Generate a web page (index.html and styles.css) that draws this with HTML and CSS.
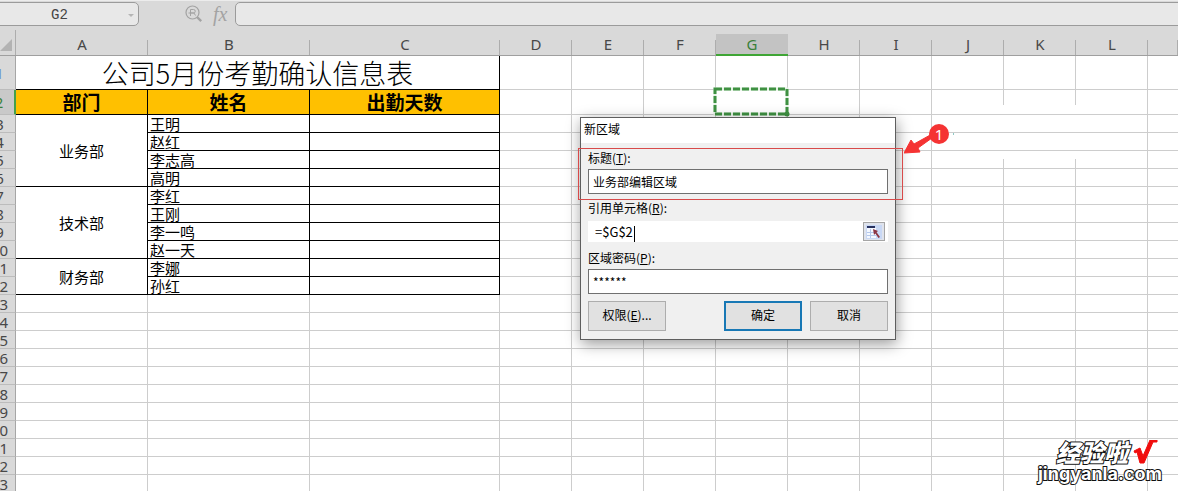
FILE: index.html
```html
<!DOCTYPE html>
<html lang="zh-CN">
<head>
<meta charset="utf-8">
<meta name="viewport" content="width=device-width, initial-scale=1">
<title>公司5月份考勤确认信息表</title>
<link rel="stylesheet" href="styles.css">
</head>
<body>
<main class="app">
  <div class="formula-bar">
    <button class="name-box" type="button" aria-label="名称框"><span>G2</span><i class="caret"></i></button>
    <div class="tools">
      <svg width="18" height="18" viewBox="0 0 18 18" fill="none" stroke="#a3a3a3" aria-hidden="true">
        <circle cx="7.5" cy="7.5" r="6.5" stroke-width="1.2"/>
        <path d="M5.500 11V4.500h3a1.700 1.700 0 0 1 0 3.500h-3M3.500 8H9l1.500 2.500" stroke-width="1"/>
        <path d="M12 12l4.200 4.200" stroke-width="2.4"/>
      </svg>
      <span class="fx">fx</span>
    </div>
    <input class="formula" type="text" aria-label="编辑栏">
  </div>

  <table class="sheet">
    <colgroup><col class="c-num"><col class="c-a"><col class="c-b"><col class="c-c"><col class="c-std" span="9"><col></colgroup>
    <thead>
      <tr><th class="corner"><svg width="12" height="12" viewBox="0 0 12 12" aria-hidden="true"><path d="M12 0v12H0z" fill="#b3b3b3"/></svg></th><th>A</th><th>B</th><th>C</th><th>D</th><th>E</th><th>F</th><th class="current">G</th><th>H</th><th>I</th><th>J</th><th>K</th><th>L</th><th></th></tr>
    </thead>
    <tbody>
      <tr class="r-title"><th class="blue">1</th><td class="ink title" colspan="3">公司5月份考勤确认信息表</td><td><td><td><td><td><td><td><td><td><td></tr>
      <tr class="r-head"><th class="current">2</th><td class="ink head">部门</td><td class="ink head">姓名</td><td class="ink head">出勤天数</td><td><td><td><td class="selected"><svg class="marquee" aria-hidden="true"><rect class="base" width="100%" height="100%"/><rect class="dash" width="100%" height="100%"/><circle class="handle" cx="100%" cy="100%" r="2.5"/></svg></td><td><td><td class="line-top"><td class="line-top"><td><td></tr>
      <tr><th>3</th><td class="ink dept" rowspan="4">业务部</td><td class="ink name">王明</td><td class="ink"></td><td><td><td><td><td><td><td class="no-line"><td class="no-line"><td><td></tr>
      <tr><th>4</th><td class="ink name">赵红</td><td class="ink"></td><td><td><td><td><td><td><td class="no-line"><td class="no-line"><td><td></tr>
      <tr><th>5</th><td class="ink name">李志高</td><td class="ink"></td><td><td><td><td><td><td><td class="line-bottom"><td class="line-bottom"><td><td></tr>
      <tr><th>6</th><td class="ink name">高明</td><td class="ink"></td><td><td><td><td><td><td><td><td><td><td></tr>
      <tr><th>7</th><td class="ink dept" rowspan="4">技术部</td><td class="ink name">李红</td><td class="ink"></td><td><td><td><td><td><td><td><td><td><td></tr>
      <tr><th>8</th><td class="ink name">王刚</td><td class="ink"></td><td><td><td><td><td><td><td><td><td><td></tr>
      <tr><th>9</th><td class="ink name">李一鸣</td><td class="ink"></td><td><td><td><td><td><td><td><td><td><td></tr>
      <tr><th>10</th><td class="ink name">赵一天</td><td class="ink"></td><td><td><td><td><td><td><td><td><td><td></tr>
      <tr><th>11</th><td class="ink dept" rowspan="2">财务部</td><td class="ink name">李娜</td><td class="ink"></td><td><td><td><td><td><td><td><td><td><td></tr>
      <tr><th>12</th><td class="ink name">孙红</td><td class="ink"></td><td><td><td><td><td><td><td><td><td><td></tr>
      <tr><th>13</th><td><td><td><td><td><td><td><td><td><td><td><td><td></tr>
      <tr><th>14</th><td><td><td><td><td><td><td><td><td><td><td><td><td></tr>
      <tr><th>15</th><td><td><td><td><td><td><td><td><td><td><td><td><td></tr>
      <tr><th>16</th><td><td><td><td><td><td><td><td><td><td><td><td><td></tr>
      <tr><th>17</th><td><td><td><td><td><td><td><td><td><td><td><td><td></tr>
      <tr><th>18</th><td><td><td><td><td><td><td><td><td><td><td><td><td></tr>
      <tr><th>19</th><td><td><td><td><td><td><td><td><td><td><td><td><td></tr>
      <tr><th>20</th><td><td><td><td><td><td><td><td><td><td><td><td><td></tr>
      <tr><th>21</th><td><td><td><td><td><td><td><td><td><td><td><td><td></tr>
      <tr><th>22</th><td><td><td><td><td><td><td><td><td><td><td><td><td></tr>
      <tr><th>23</th><td><td><td><td><td><td><td><td><td><td><td><td><td></tr>
    </tbody>
  </table>

  <form class="dialog" role="dialog" aria-labelledby="dialog-title">
    <h1 class="dialog-title" id="dialog-title">新区域</h1>
    <div class="dialog-body">
      <label for="area-title">标题(<u>T</u>):</label>
      <input class="field" id="area-title" type="text" value="业务部编辑区域">
      <label for="area-ref">引用单元格(<u>R</u>):</label>
      <div class="ref">
        <div class="ref-value"><input id="area-ref" type="text" value="=$G$2"><i class="text-caret"></i></div>
        <button class="picker" type="button" aria-label="选择单元格">
          <svg width="16" height="14" viewBox="0 0 16 14" aria-hidden="true">
            <rect width="16" height="14" fill="#c9d8f5"/>
            <rect x="1" y="3" width="9" height="10" fill="#f4f8ff"/>
            <path d="M4.500 4v9M1 7.500h9M1 10.500h9" stroke="#b5c8ea" fill="none"/>
            <rect x="1" y="1" width="8" height="2" fill="#26305e"/>
            <path d="M7 4l5 2-1.400 1.200L14 12l-1.500 1-3.200-4.500L8 10z" fill="#8b3543"/>
          </svg>
        </button>
      </div>
      <label for="area-pass">区域密码(<u>P</u>):</label>
      <input class="field" id="area-pass" type="text" value="******">
      <div class="actions">
        <button type="button">权限(<u>E</u>)...</button>
        <button class="primary" type="button">确定</button>
        <button type="button">取消</button>
      </div>
    </div>
  </form>

  <div class="callout"></div>
  <svg class="arrow" width="52" height="34" viewBox="0 0 52 34" aria-hidden="true">
    <path d="M0 31L7 18l3 4L28 12v4L14 26l2 4z" fill="#f53333" stroke="#f53333"/>
    <path d="M49.500 11v2" stroke="#8fc9c4"/>
  </svg>
  <span class="badge">1</span>

  <div class="watermark">
    <div class="mark-top"><span>经验啦</span>
      <svg width="25" height="24" viewBox="0 0 25 24" aria-hidden="true"><path d="M1 11l6-3 3 8L17 0h7v2h-4L11 23H7L4 12l-2 1z" fill="#f00d0d" stroke="#f00d0d" stroke-width="1"/></svg>
    </div>
    <div class="mark-site">jingyanla.com</div>
  </div>
</main>
</body>
</html>
```
FILE: styles.css
```css
* {
  box-sizing: border-box;
}

body {
  margin: 0;
  background: #fff;
  font-family: "Noto Sans", "Noto Sans CJK SC", sans-serif;
}

.app {
  position: relative;
  height: 100vh;
  overflow: hidden;
}

button,
input {
  font: inherit;
  color: inherit;
}

/* Formula bar */
.formula-bar {
  display: flex;
  align-items: flex-start;
  height: 30px;
  padding-top: 1px;
  background: #d9d9d9;
  border-top: 1px solid #ececec;
}

.name-box {
  display: flex;
  align-items: center;
  width: 149px;
  height: 24px;
  margin-left: -10px;
  padding: 2px 4px 0 0;
  border: 1px solid #9b9b9b;
  border-radius: 5px;
  background: #e8e8e8;
  color: #444;
  font: 14px "Liberation Mono", monospace;
}

.name-box span {
  flex: 1;
}

.caret {
  border: 3px solid transparent;
  border-top-color: #b5b5b5;
  border-bottom: 0;
}

.tools {
  display: flex;
  align-items: center;
  gap: 10px;
  width: 96px;
  height: 24px;
  padding-left: 46px;
}

.tools svg {
  flex: none;
}

.fx {
  color: #a3a3a3;
  font: italic 20px "Liberation Serif", serif;
}

.formula {
  flex: 1;
  min-width: 0;
  height: 24px;
  margin-right: -10px;
  border: 1px solid #9b9b9b;
  border-radius: 5px;
  background: #e8e8e8;
}

/* Sheet: scrolled so that half of the row number column is out of view */
.sheet {
  width: calc(100% + 16px);
  margin-left: -16px;
  table-layout: fixed;
  border-collapse: separate;
  border-spacing: 0;
}

.c-num { width: 32px; }
.c-a { width: 132px; }
.c-b { width: 162px; }
.c-c { width: 190px; }
.c-std { width: 72px; }

.sheet th,
.sheet td {
  height: 18px;
  padding: 0;
  line-height: 16px;
}

.sheet th {
  background: #d9d9d9;
  color: #484848;
  font-size: 15px;
  font-weight: 400;
}

.sheet thead th {
  height: 26px;
  padding-top: 3px;
  border-bottom: 1px solid #9f9f9f;
  background: linear-gradient(#adadad, #adadad) right bottom / 1px 15px no-repeat #d9d9d9;
}

.sheet thead .corner {
  padding: 4px 4px 0 0;
  text-align: right;
  background-size: 1px 100%;
}

.corner svg {
  display: block;
  margin-left: auto;
}

.sheet thead .current {
  padding-top: 4px;
  border-bottom: 2px solid #3fa535;
  background: linear-gradient(#d9d9d9 4px, #c3c3c3 4px);
  color: #3a8039;
}

.sheet tbody th {
  border-right: 1px solid #a6a6a6;
  border-bottom: 1px solid #bcbcbc;
}

.sheet tbody th.blue {
  color: #6b8fd0;
}

.sheet tbody th.current {
  border-right: 2px solid #45a04b;
  background: #c9c9c9;
  color: #3a8039;
}

.sheet td {
  border-right: 1px solid #cdcdcd;
  border-bottom: 1px solid #cdcdcd;
}

.sheet td:last-child {
  border-right: 0;
}

.sheet .r-title > * { height: 34px; }
.sheet .r-head > * { height: 25px; }

.sheet td.ink {
  border-color: #000;
  color: #000;
  font-family: "Noto Sans CJK SC", sans-serif;
}

.sheet .title {
  padding-top: 1px;
  font-size: 27px;
  font-weight: 300;
  line-height: 32px;
  text-align: center;
}

.sheet .head {
  background: #ffc000;
  font-size: 19px;
  font-weight: 700;
  line-height: 24px;
  text-align: center;
}

.sheet .dept {
  font-size: 15px;
  font-weight: 400;
  text-align: center;
}

.sheet .name {
  padding-left: 2px;
  font-size: 15px;
  font-weight: 400;
}

.sheet .line-top,
.sheet .no-line,
.sheet .line-bottom {
  border-right: 0;
}

.sheet .line-top {
  background: linear-gradient(#cdcdcd, #cdcdcd) right top / 1px 15px no-repeat;
}

.sheet .line-bottom {
  background: linear-gradient(#cdcdcd, #cdcdcd) right bottom / 1px 9px no-repeat;
}

.selected {
  position: relative;
}

.marquee {
  position: absolute;
  top: -1px;
  left: -1px;
  width: calc(100% + 1px);
  height: calc(100% + 1px);
  overflow: visible;
  fill: none;
  stroke-width: 3px;
}

.base { stroke: #e4f2e4; }
.dash { stroke: #3f9142; stroke-dasharray: 7 2; }
.handle { fill: #3f9142; }

/* Dialog */
.dialog {
  position: absolute;
  top: 117px;
  left: 580px;
  width: 316px;
  border: 1px solid #5e5e5e;
  background: #f0f0f0;
  box-shadow: 1px 4px 14px rgba(0, 0, 0, .4);
  color: #000;
  font-family: "Noto Sans CJK SC", sans-serif;
  font-size: 12px;
  line-height: 16px;
}

.dialog-title {
  margin: 0;
  padding: 3px 3px 6px;
  background: #fff;
  font-size: 12px;
  font-weight: 400;
}

.dialog-body {
  display: flex;
  flex-direction: column;
  padding: 7px 7px 8px;
}

.dialog-body label {
  height: 19px;
}

.field {
  width: 100%;
  height: 25px;
  margin-bottom: 6px;
  padding: 0 4px;
  border: 1px solid #707070;
  background: #fff;
}

.ref {
  display: flex;
  align-items: center;
  height: 21px;
  margin: 2px 0 8px;
  padding-right: 3px;
  background: #fff;
}

.ref-value {
  position: relative;
  flex: 1;
}

.ref-value input {
  display: block;
  width: 100%;
  padding: 0 7px;
  border: 0;
  background: none;
  font-size: 13px;
}

.text-caret {
  position: absolute;
  top: 2px;
  left: 46px;
  width: 1px;
  height: 16px;
  background: #000;
}

.picker {
  display: grid;
  place-items: center;
  width: 22px;
  height: 19px;
  padding: 0;
  border: 1px solid #a5a5a5;
  background: #dfe3ec;
}

.actions {
  display: flex;
  gap: 8px;
  padding-top: 1px;
}

.actions button {
  width: 78px;
  height: 30px;
  padding: 0 0 2px;
  border: 1px solid #adadad;
  background: #e1e1e1;
}

.actions .primary {
  margin-left: auto;
  border: 2px solid #1878b5;
}

/* Annotation */
.callout {
  position: absolute;
  top: 148px;
  left: 578px;
  width: 325px;
  height: 52px;
  border: 1px solid #d84a4a;
}

.arrow {
  position: absolute;
  top: 122px;
  left: 904px;
}

.badge {
  position: absolute;
  top: 124px;
  left: 929px;
  width: 20px;
  height: 20px;
  border-radius: 50%;
  background: #f53333;
  color: #fff;
  font-size: 15px;
  line-height: 20px;
  text-align: center;
}

.watermark {
  position: absolute;
  right: 16px;
  bottom: 6px;
  color: #fff;
  font-family: "Noto Sans CJK SC", sans-serif;
  font-weight: 900;
  -webkit-text-stroke: 2px #111;
  paint-order: stroke fill;
}

.mark-top {
  display: flex;
  align-items: center;
  justify-content: flex-end;
  gap: 5px;
  padding-right: 4px;
  font-size: 24px;
  font-style: italic;
  line-height: 26px;
}

.mark-site {
  padding-bottom: 2px;
  font-family: Inter, sans-serif;
  font-size: 18px;
  font-weight: 700;
  line-height: 18px;
}
```
